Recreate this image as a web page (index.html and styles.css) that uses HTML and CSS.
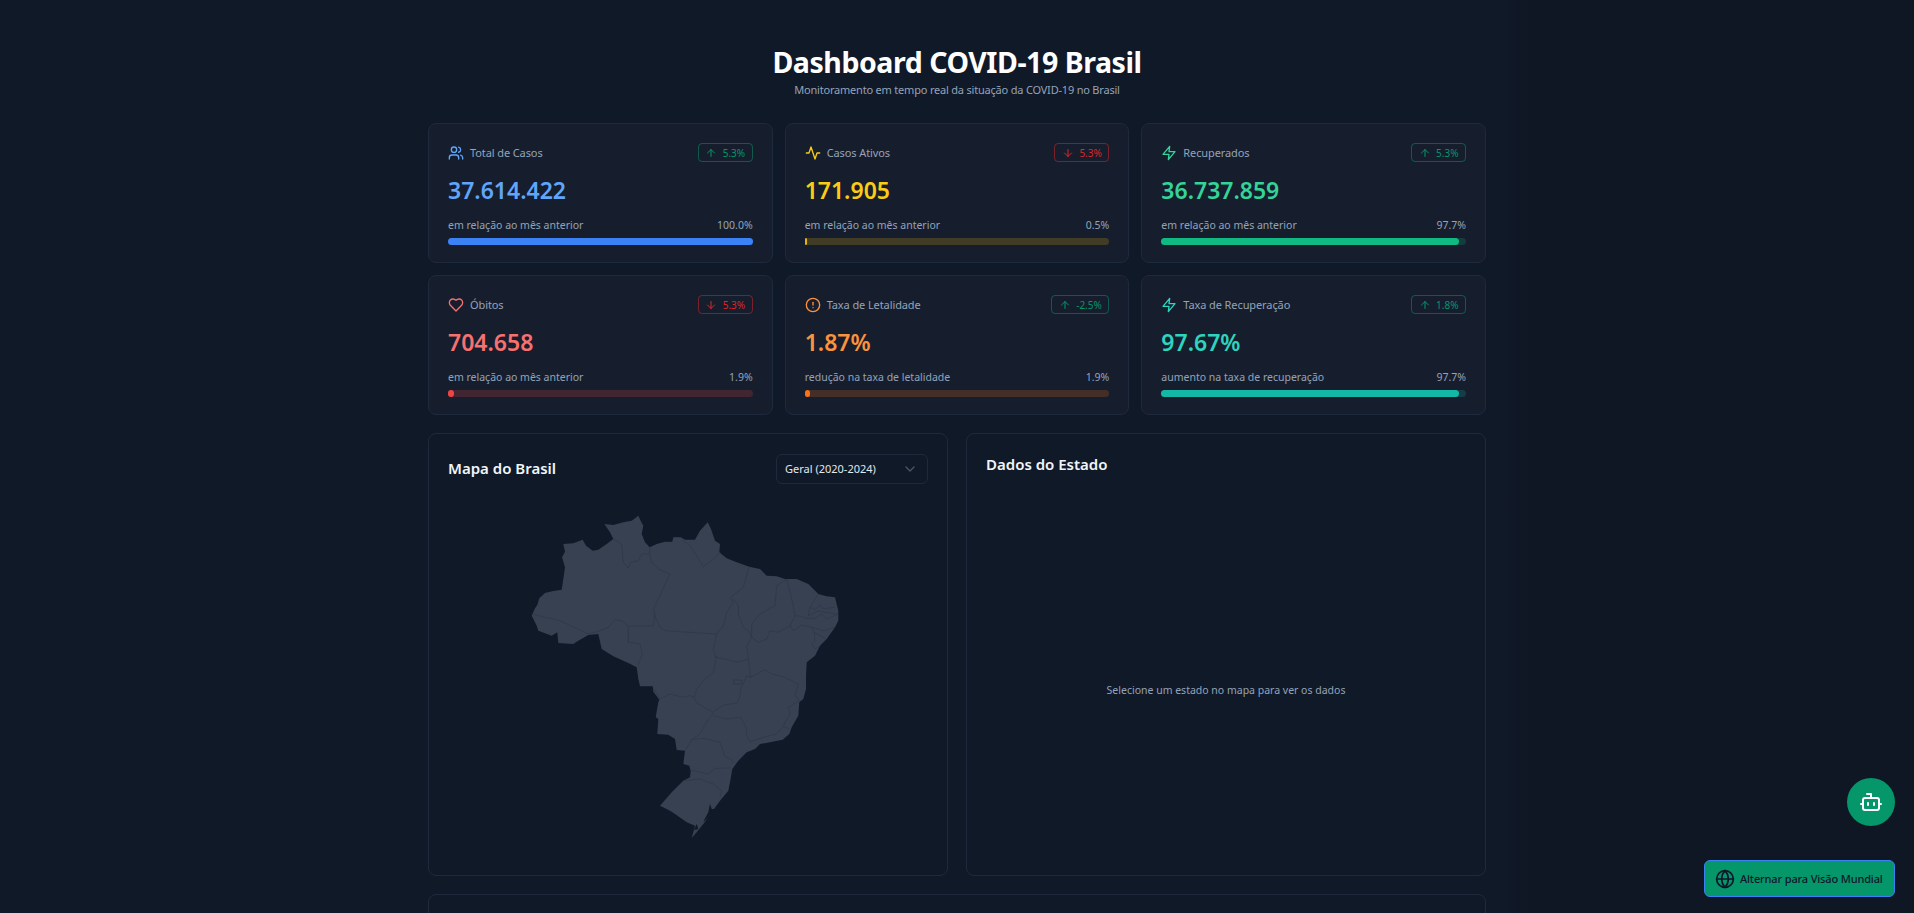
FILE: index.html
```html
<!DOCTYPE html>
<html lang="pt-BR">
  <head>
    <meta charset="UTF-8" />
    <title>Dashboard COVID-19 Brasil</title>
    <link rel="stylesheet" href="styles.css">
  </head>

  <body>
    <svg class="sprite" width="0" height="0" aria-hidden="true">
      <symbol id="i-users" viewBox="0 0 24 24"><path d="M16 21v-2a4 4 0 0 0-4-4H6a4 4 0 0 0-4 4v2" /><circle cx="9" cy="7" r="4" /><path d="M22 21v-2a4 4 0 0 0-3-3.87" /><path d="M16 3.13a4 4 0 0 1 0 7.75" /></symbol>
      <symbol id="i-activity" viewBox="0 0 24 24"><path d="M22 12h-4l-3 9L9 3l-3 9H2" /></symbol>
      <symbol id="i-zap" viewBox="0 0 24 24"><path d="M13 2 3 14h9l-1 8 10-12h-9l1-8z" /></symbol>
      <symbol id="i-heart" viewBox="0 0 24 24"><path d="M19 14c1.49-1.46 3-3.21 3-5.5A5.5 5.5 0 0 0 16.5 3c-1.76 0-3 .5-4.5 2-1.5-1.5-2.74-2-4.5-2A5.5 5.5 0 0 0 2 8.5c0 2.3 1.5 4.05 3 5.5l7 7Z" /></symbol>
      <symbol id="i-alert" viewBox="0 0 24 24"><circle cx="12" cy="12" r="10" /><path d="M12 8v4" /><path d="M12 16h.01" /></symbol>
      <symbol id="i-up" viewBox="0 0 24 24"><path d="m5 12 7-7 7 7" /><path d="M12 19V5" /></symbol>
      <symbol id="i-down" viewBox="0 0 24 24"><path d="M12 5v14" /><path d="m19 12-7 7-7-7" /></symbol>
    </svg>

    <div class="container">
      <header class="page-head">
        <h1>Dashboard COVID-19 Brasil</h1>
        <p>Monitoramento em tempo real da situação da COVID-19 no Brasil</p>
      </header>

      <section class="stats">
        <div class="stat blue">
          <div class="stat-head">
            <span class="stat-label"><svg class="icon"><use href="#i-users" /></svg>Total de Casos</span>
            <span class="badge good"><svg class="arrow"><use href="#i-up" /></svg>5.3%</span>
          </div>
          <div class="stat-value">37.614.422</div>
          <div class="stat-meta"><span>em relação ao mês anterior</span><span>100.0%</span></div>
          <div class="track"><div class="fill" style="width: 100%"></div></div>
        </div>

        <div class="stat yellow">
          <div class="stat-head">
            <span class="stat-label"><svg class="icon"><use href="#i-activity" /></svg>Casos Ativos</span>
            <span class="badge bad"><svg class="arrow"><use href="#i-down" /></svg>5.3%</span>
          </div>
          <div class="stat-value">171.905</div>
          <div class="stat-meta"><span>em relação ao mês anterior</span><span>0.5%</span></div>
          <div class="track"><div class="fill" style="width: 0.5%"></div></div>
        </div>

        <div class="stat green">
          <div class="stat-head">
            <span class="stat-label"><svg class="icon"><use href="#i-zap" /></svg>Recuperados</span>
            <span class="badge good"><svg class="arrow"><use href="#i-up" /></svg>5.3%</span>
          </div>
          <div class="stat-value">36.737.859</div>
          <div class="stat-meta"><span>em relação ao mês anterior</span><span>97.7%</span></div>
          <div class="track"><div class="fill" style="width: 97.7%"></div></div>
        </div>

        <div class="stat red">
          <div class="stat-head">
            <span class="stat-label"><svg class="icon"><use href="#i-heart" /></svg>Óbitos</span>
            <span class="badge bad"><svg class="arrow"><use href="#i-down" /></svg>5.3%</span>
          </div>
          <div class="stat-value">704.658</div>
          <div class="stat-meta"><span>em relação ao mês anterior</span><span>1.9%</span></div>
          <div class="track"><div class="fill" style="width: 1.9%"></div></div>
        </div>

        <div class="stat orange">
          <div class="stat-head">
            <span class="stat-label"><svg class="icon"><use href="#i-alert" /></svg>Taxa de Letalidade</span>
            <span class="badge good"><svg class="arrow"><use href="#i-up" /></svg>-2.5%</span>
          </div>
          <div class="stat-value">1.87%</div>
          <div class="stat-meta"><span>redução na taxa de letalidade</span><span>1.9%</span></div>
          <div class="track"><div class="fill" style="width: 1.9%"></div></div>
        </div>

        <div class="stat teal">
          <div class="stat-head">
            <span class="stat-label"><svg class="icon"><use href="#i-zap" /></svg>Taxa de Recuperação</span>
            <span class="badge good"><svg class="arrow"><use href="#i-up" /></svg>1.8%</span>
          </div>
          <div class="stat-value">97.67%</div>
          <div class="stat-meta"><span>aumento na taxa de recuperação</span><span>97.7%</span></div>
          <div class="track"><div class="fill" style="width: 97.7%"></div></div>
        </div>
      </section>

      <section class="panels">
        <div class="panel">
          <div class="panel-head">
            <h2>Mapa do Brasil</h2>
            <div class="select">
              <span>Geral (2020-2024)</span>
              <svg class="chevron" viewBox="0 0 24 24"><path d="m6 9 6 6 6-6" /></svg>
            </div>
          </div>
          <div class="map">
            <svg width="336" height="336" viewBox="520 510 336 336">
              <path class="land" d="M531.7 616.7 535 609.3 537.3 606 539.3 599.3 545 594 553.3 592 561.7 590.7 563.3 580 565 568.3 562 558.3 565 552.7 563.3 545 573.3 544.3 582.7 540.7 586 546.7 592.7 551.7 598.3 550.7 606.7 545 613.3 540 610 533.3 604.3 525 613.3 526 623.3 523.3 631.7 521.7 638.3 516.7 640.7 521.7 643.3 526.7 641.7 535 645 543.3 649.7 548.3 656.7 545 665 542.7 672.3 542.7 673.3 538.3 680.7 538.3 685 540.7 695 540.7 700 531.7 707.7 523.3 711 530 715 541.7 720 545 719.3 553.3 726.7 559.3 736.7 563.3 749.3 567.7 760 570 766.7 576.7 776.7 577.3 785 580 796.7 580 808.3 585 818.3 595 826.7 597.3 835 598.3 838.3 611.7 838.3 621.7 835 628.3 826.7 640 820 646.7 815 656.7 806.7 663.3 806 676.7 806 690 803.3 700 799.3 703.3 798.3 716.7 791.7 728.3 789.3 735 782.7 740.7 770 743.3 760 745 755 750 746.7 753.3 738.3 761.7 732.3 770 730 783.3 728.3 791.7 720 801.7 711.7 813.3 703.3 825 696.7 833.3 691.7 839 695 826.7 686.7 823.3 675 815 670 811.7 660 806.7 671.7 793.3 683.3 781.7 690 778.3 690.7 771.7 689.3 766.7 683.3 765 685 751.7 676.7 751 675 740 668.3 735.7 657.3 735 658.3 720 655.7 718.3 658.3 703.3 659.3 700.7 653.3 692.7 652.7 687.3 640 687.3 638.3 680 636.7 668.3 628.3 664 613.3 657.3 601.7 650 598.3 635 588.3 636 578.3 641.7 573.3 645 558.3 644 557.3 633.3 551.7 636.7 538.3 631.7 536.7 626.7Z" />
              <path class="lake" d="M710 805 711.7 810 715 810 706.7 820 703.3 822.7 708.3 813.3ZM696.7 825 698.3 830 694 831Z" />
              <g class="borders">
                <polyline points="531.7,615 560,621.7 588.3,635 600,631.7 608.3,628.3 615,620.7 621.7,621.7 628.3,627.3 653.3,626.7" />
                <polyline points="628.3,627.3 628.3,643.3 640,645 642.3,655 638.3,665.7" />
                <polyline points="653.3,626.7 655,613.3 653.3,610.7 670,575" />
                <polyline points="613.3,540 621.7,545 623.3,563.3 628.3,569 630.7,563.3 638.3,561.7 641.7,555 649.7,555" />
                <polyline points="649.7,548.3 649.7,555 651.7,563.3 658.3,570 670,575" />
                <polyline points="681.7,540.7 690,546.7 696.7,556.7 703.3,567.7 713.3,560 720,553.3" />
                <polyline points="653.3,613.3 660,628.3 665,631.7 716.7,635" />
                <polyline points="749.3,567.7 743.3,588.3 730,599.3 733.3,603.3 726.7,613.3 723.3,626.7 716.7,635 713.3,650 715.7,658.3 725,660 736.7,663.3 748.3,660" />
                <polyline points="733.3,600 738.3,606.7 738.3,615 743.3,628.3 748.3,631.7 751.7,638.3 746.7,646.7 748.3,660 750.7,678.3" />
                <polyline points="786.7,580 776.7,586.7 775,606.7 760,615 751.7,625 751.7,638.3 758.3,643.3 766.7,640 770,631.7 778.3,633.3 790,626.7" />
                <polyline points="786.7,580 791.7,600 795,616.7 790,626.7 793.3,631.7 801.7,626 811.7,628.3 823.3,631.7 835,628.3" />
                <polyline points="818.3,595 810,608.3 808.3,616.7 818.3,611.7 825,613.3 838.3,615" />
                <polyline points="810,608.3 815,610.7 820,606 823.3,610 835,608.3" />
                <polyline points="795,616.7 801.7,617.3 806.7,619.3 815,619.3 821.7,615 826.7,620 838.3,615" />
                <polyline points="811.7,628.3 814,633.3 825,639.3" />
                <polyline points="814,633.3 815,641.7 811.7,645 815,650 820,646.7" />
                <rect x="733.3" y="681" width="8.4" height="4" />
                <polyline points="750.7,678.3 746.7,676.7 743.3,685 740.7,690 740,698.3 736.7,704 723.3,706 713.3,712.7" />
                <polyline points="750.7,678.3 765,670.7 771.7,675 785,678.3 798.3,685 795,696.7 799.3,701.7 788.3,708.3 790,715 785,723.3 783.3,727.3 789.3,730" />
                <polyline points="783.3,727.3 776.7,735 763.3,738.3 750,742.7 746,735 746.7,730 740.7,718.3 726.7,720 713.3,716.7" />
                <polyline points="716.7,656.7 713.3,673.3 705,680 696.7,690 694,698.3 696.7,704 712.7,713.3 711.7,716.7 708.3,720 700,735 691.7,740.7 685,751.7" />
                <polyline points="653.3,689.3 660,700 670,695 683.3,698.3 690,696.7 694,698.3" />
                <polyline points="691.7,740.7 703.3,739.3 720,743.3 725,757.3 731.7,760.7 733.3,764.3" />
                <polyline points="690,771 708.3,775 715,769.3 730.7,769" />
                <polyline points="683.3,781.7 700,780 713.3,785 721.7,791.7 720,798.3" />
              </g>
            </svg>
          </div>
        </div>

        <div class="panel">
          <h2>Dados do Estado</h2>
          <div class="state-empty">Selecione um estado no mapa para ver os dados</div>
        </div>
      </section>

      <section class="panel extra"></section>
    </div>

    <button class="bot-button" aria-label="Assistente">
      <svg viewBox="0 0 24 24" width="24" height="24"><path d="M12 8V4H8" /><rect x="4" y="8" width="16" height="12" rx="2" /><path d="M2 14h2" /><path d="M20 14h2" /><path d="M15 13v2" /><path d="M9 13v2" /></svg>
    </button>
    <button class="view-button">
      <svg viewBox="0 0 24 24" width="20" height="20"><circle cx="12" cy="12" r="10" /><path d="M12 2a14.5 14.5 0 0 0 0 20 14.5 14.5 0 0 0 0-20" /><path d="M2 12h20" /></svg>
      Alternar para Visão Mundial
    </button>
  </body>
</html>
```

FILE: styles.css
```css
html,
body {
  height: 100%;
  overflow: hidden;
}

body {
  font-family: "Noto Sans", "Open Sans", Arial, sans-serif;
  margin: 0;
  padding: 0;
  color: #fff;
  background: linear-gradient(90deg, #101928 78.6%, #0f1624 80%);
}

.sprite {
  position: absolute;
}

.container {
  width: 1058px;
  margin: 0 auto;
  padding-top: 44px;
}

.page-head {
  text-align: center;
  margin-bottom: 25px;
}

.page-head h1 {
  margin: 0;
  font-size: 28.5px;
  line-height: 36px;
  font-weight: 700;
  letter-spacing: -0.45px;
}

.page-head p {
  margin: 2px 0 0;
  font-size: 11px;
  line-height: 16px;
  letter-spacing: -0.2px;
  color: #94a3b8;
}

.stats {
  display: grid;
  grid-template-columns: repeat(3, 1fr);
  gap: 12px;
  margin-bottom: 18px;
}

.stat {
  box-sizing: border-box;
  height: 140px;
  padding: 19px;
  background: #161e2e;
  border: 1px solid #1e293b;
  border-radius: 8px;
}

.stat-head {
  display: flex;
  justify-content: space-between;
  align-items: center;
  height: 19px;
}

.stat-label {
  display: flex;
  align-items: center;
  gap: 6px;
  font-size: 11px;
  letter-spacing: -0.1px;
  color: #94a3b8;
}

.icon {
  width: 16px;
  height: 16px;
  fill: none;
  stroke: currentColor;
  stroke-width: 2;
  stroke-linecap: round;
  stroke-linejoin: round;
}

.stat-label .icon {
  color: var(--text);
}

.stat-value {
  margin-top: 12px;
  font-size: 23px;
  line-height: 32px;
  font-weight: 600;
  color: var(--text);
}

.stat-meta {
  display: flex;
  justify-content: space-between;
  margin-top: 11px;
  font-size: 10.5px;
  line-height: 16px;
  color: #94a3b8;
}

.track {
  height: 6.5px;
  margin-top: 5px;
  border-radius: 4px;
  background: var(--track);
}

.fill {
  height: 100%;
  min-width: 2px;
  border-radius: 4px;
  background: var(--bar);
}

.blue {
  --text: #60a5fa;
  --bar: #3b82f6;
  --track: rgba(59, 130, 246, 0.2);
}

.yellow {
  --text: #facc15;
  --bar: #eab308;
  --track: rgba(234, 179, 8, 0.2);
}

.green {
  --text: #34d399;
  --bar: #10b981;
  --track: rgba(16, 185, 129, 0.2);
}

.red {
  --text: #f87171;
  --bar: #ef4444;
  --track: rgba(239, 68, 68, 0.2);
}

.orange {
  --text: #fb923c;
  --bar: #f97316;
  --track: rgba(249, 115, 22, 0.2);
}

.teal {
  --text: #2dd4bf;
  --bar: #14b8a6;
  --track: rgba(20, 184, 166, 0.2);
}

.badge {
  display: flex;
  align-items: center;
  gap: 5.5px;
  box-sizing: border-box;
  height: 19px;
  padding: 0 6.5px;
  border: 1px solid;
  border-radius: 4px;
  font-size: 10px;
}

.badge.good {
  color: #059669;
  border-color: rgba(5, 150, 105, 0.5);
}

.badge.bad {
  color: #dc2626;
  border-color: rgba(220, 38, 38, 0.5);
}

.arrow {
  width: 12px;
  height: 12px;
  fill: none;
  stroke: currentColor;
  stroke-width: 2;
  stroke-linecap: round;
  stroke-linejoin: round;
}

.panels {
  display: grid;
  grid-template-columns: 1fr 1fr;
  gap: 18px;
  margin-bottom: 18px;
}

.panel {
  box-sizing: border-box;
  height: 443px;
  padding: 19px;
  border: 1px solid #1e293b;
  border-radius: 8px;
  display: flex;
  flex-direction: column;
}

.panel h2 {
  margin: 0;
  font-size: 15px;
  line-height: 22px;
  font-weight: 600;
  color: #f1f5f9;
}

.panel-head {
  display: flex;
  justify-content: space-between;
  align-items: center;
  height: 31px;
}

.panel-head h2 {
  margin-bottom: 2px;
}

.select {
  box-sizing: border-box;
  width: 152px;
  height: 30px;
  display: flex;
  justify-content: space-between;
  align-items: center;
  padding: 0 9px 0 8px;
  border: 1px solid #1e293b;
  border-radius: 6px;
  font-size: 11px;
  color: #e2e8f0;
}

.chevron {
  width: 16px;
  height: 16px;
  fill: none;
  stroke: #475569;
  stroke-width: 2;
  stroke-linecap: round;
  stroke-linejoin: round;
}

.map {
  display: flex;
  justify-content: center;
  margin-top: 25px;
}

.land {
  fill: #374151;
}

.lake {
  fill: #101928;
}

.borders {
  fill: none;
  stroke: #2c3747;
  stroke-width: 0.7;
}

.state-empty {
  flex: 1;
  display: flex;
  align-items: center;
  justify-content: center;
  padding-top: 48px;
  font-size: 10.5px;
  color: #94a3b8;
}

.extra {
  height: 200px;
}

.bot-button {
  position: fixed;
  right: 19px;
  bottom: 87px;
  width: 48px;
  height: 48px;
  padding: 0;
  display: flex;
  align-items: center;
  justify-content: center;
  border: none;
  border-radius: 50%;
  background: #059669;
  cursor: pointer;
}

.bot-button svg {
  fill: none;
  stroke: #fff;
  stroke-width: 2;
  stroke-linecap: round;
  stroke-linejoin: round;
}

.view-button {
  position: fixed;
  right: 19px;
  bottom: 16px;
  box-sizing: border-box;
  width: 191px;
  height: 37px;
  display: flex;
  align-items: center;
  gap: 5px;
  padding: 0 10px;
  border: 1px solid #3b82f6;
  border-radius: 6px;
  background: #059669;
  color: #0f172a;
  font-family: inherit;
  font-size: 11px;
  font-weight: 500;
  letter-spacing: -0.15px;
  white-space: nowrap;
  cursor: pointer;
}

.view-button svg {
  flex-shrink: 0;
  fill: none;
  stroke: #0f172a;
  stroke-width: 2;
  stroke-linecap: round;
  stroke-linejoin: round;
}
```
